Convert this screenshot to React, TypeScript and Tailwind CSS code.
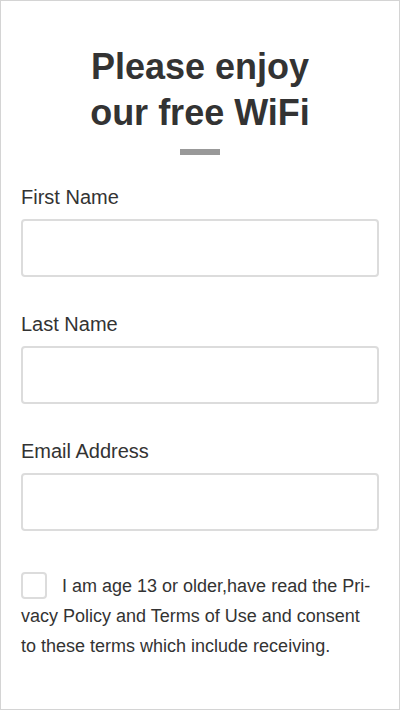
import React from "react";

export default function App() {
  return (
    <div
      className="box-border h-[710px] w-[400px] overflow-hidden border border-[#d4d4d4] bg-white px-5 text-[#333]"
      style={{ fontFamily: '"Liberation Sans", Arial, sans-serif' }}
    >
      <h1 className="mt-[43px] text-center text-[36px] font-bold leading-[46px] text-[#333]">
        Please enjoy
        <br />
        our free WiFi
      </h1>
      <div className="mx-auto mt-[13px] h-[6px] w-[40px] bg-[#999]" />

      <div className="mt-[30px]">
        <label className="block text-[20px] leading-[24px]">First Name</label>
        <input
          type="text"
          className="mt-[10px] box-border block h-[58px] w-full rounded-[4px] border-2 border-[#dcdcdc] bg-white outline-none"
        />
      </div>

      <div className="mt-[35px]">
        <label className="block text-[20px] leading-[24px]">Last Name</label>
        <input
          type="text"
          className="mt-[10px] box-border block h-[58px] w-full rounded-[4px] border-2 border-[#dcdcdc] bg-white outline-none"
        />
      </div>

      <div className="mt-[35px]">
        <label className="block text-[20px] leading-[24px]">Email Address</label>
        <input
          type="text"
          className="mt-[10px] box-border block h-[58px] w-full rounded-[4px] border-2 border-[#dcdcdc] bg-white outline-none"
        />
      </div>

      <p className="mt-[40px] text-[18px] leading-[30px] text-[#333]">
        <span className="float-left mr-[15px] mt-[1px] box-border block h-[27px] w-[26px] rounded-[4px] border-2 border-[#dcdcdc] bg-white" />
        I am age 13 or older,have read the Pri-
        <br />
        vacy Policy and Terms of Use and consent
        <br />
        to these terms which include receiving.
      </p>
    </div>
  );
}
